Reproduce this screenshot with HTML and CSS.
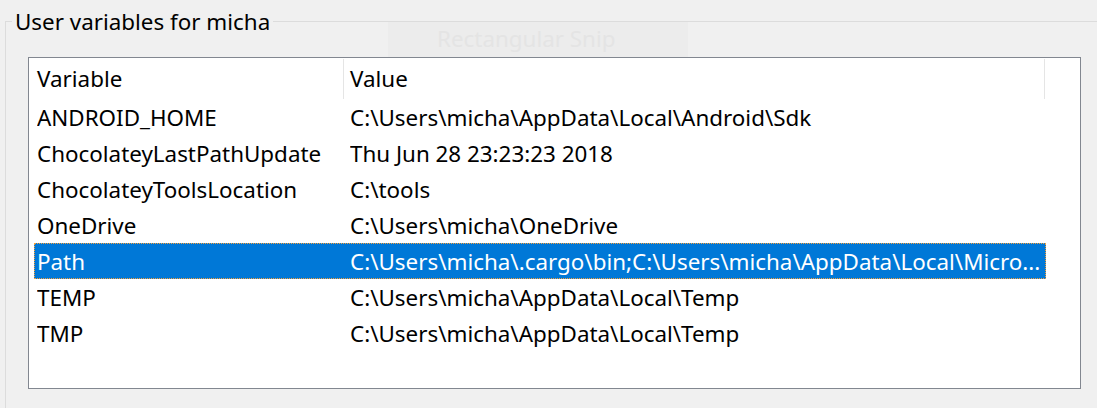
FILE: index.html
```html
<!DOCTYPE html>
<html>
<head>
<meta charset="utf-8">
<link rel="stylesheet" href="styles.css">
</head>
<body>
<div class="group">
  <div class="legend">User variables for micha</div>
  <div class="list">
    <div class="header">
      <div class="hcell hvar">Variable</div>
      <div class="hcell hval">Value</div>
      <div class="hcell hrest"></div>
    </div>
    <div class="rows">
      <div class="row"><span class="cvar">ANDROID_HOME</span><span class="cval">C:\Users\micha\AppData\Local\Android\Sdk</span></div>
      <div class="row"><span class="cvar">ChocolateyLastPathUpdate</span><span class="cval">Thu Jun 28 23:23:23 2018</span></div>
      <div class="row"><span class="cvar">ChocolateyToolsLocation</span><span class="cval">C:\tools</span></div>
      <div class="row"><span class="cvar">OneDrive</span><span class="cval">C:\Users\micha\OneDrive</span></div>
      <div class="row selected"><span class="cvar">Path</span><span class="cval">C:\Users\micha\.cargo\bin;C:\Users\micha\AppData\Local\Micro...</span></div>
      <div class="row"><span class="cvar">TEMP</span><span class="cval">C:\Users\micha\AppData\Local\Temp</span></div>
      <div class="row"><span class="cvar">TMP</span><span class="cval">C:\Users\micha\AppData\Local\Temp</span></div>
    </div>
  </div>
</div>
<div class="snip">Rectangular Snip</div>
</body>
</html>
```
FILE: styles.css
```css
html, body {
  margin: 0;
  padding: 0;
  background: #f0f0f0;
  font-family: "Noto Sans", "Open Sans", sans-serif;
  font-size: 22.4px;
  color: #000;
  overflow: hidden;
  width: 1097px;
  height: 408px;
}

.group {
  position: relative;
  margin: 21px 0 0 5px;
  border-top: 1px solid #dcdcdc;
  border-left: 1px solid #dcdcdc;
  height: 400px;
  padding: 35px 0 0 22px;
  box-sizing: border-box;
}

.legend {
  position: absolute;
  left: 6px;
  top: -17px;
  padding: 0 3px;
  background: #f0f0f0;
  line-height: 34px;
  white-space: nowrap;
}

.list {
  width: 1053px;
  height: 332px;
  box-sizing: border-box;
  border: 1px solid #828790;
  background: #fff;
}

.header {
  display: flex;
  height: 41px;
}

.hcell {
  white-space: nowrap;
}

.hvar {
  width: 306px;
  padding-left: 8px;
  border-right: 1px solid #e5e5e5;
  margin-top: 1px;
  line-height: 40px;
}

.hval {
  width: 694px;
  padding-left: 6px;
  border-right: 1px solid #e5e5e5;
  margin-top: 1px;
  line-height: 40px;
}

.hrest {
  flex: 1;
}

.rows {
  display: flex;
  flex-direction: column;
  padding-left: 5px;
}

.row {
  display: grid;
  grid-template-columns: 313px 1fr;
  width: 1012px;
  height: 36px;
  line-height: 34px;
  padding: 2px 0 0 3px;
  box-sizing: border-box;
  white-space: nowrap;
  overflow: hidden;
}

.cvar, .cval {
  overflow: hidden;
}

.row.selected {
  background: #0078d7;
  color: #fff;
  outline: 1px dotted #f5a03c;
  outline-offset: -1px;
}

.snip {
  position: absolute;
  left: 388px;
  top: 22px;
  width: 300px;
  height: 35px;
  padding-left: 49px;
  box-sizing: border-box;
  background: #ececec;
  color: #e4e4e4;
  line-height: 33px;
  white-space: nowrap;
}
```
